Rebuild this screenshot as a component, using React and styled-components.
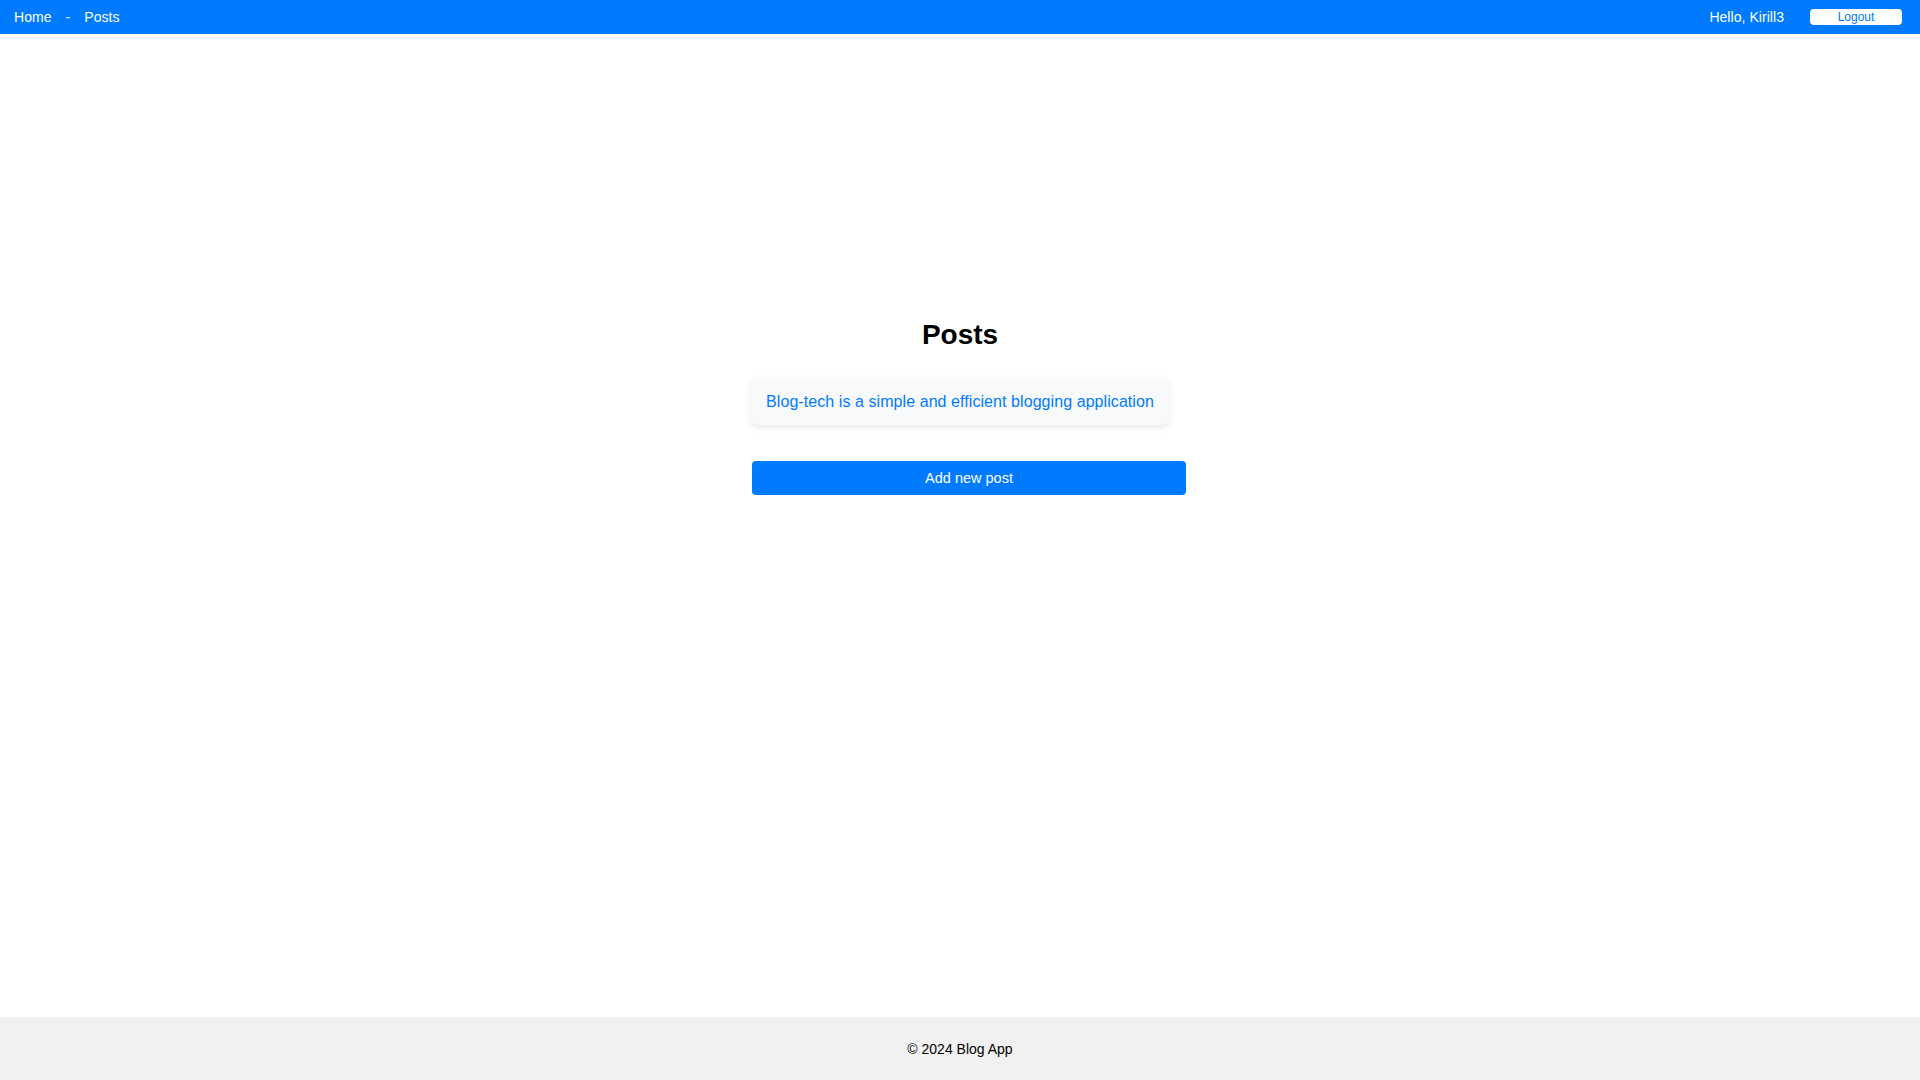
import React from "react";
import styled, { createGlobalStyle } from "styled-components";

const GlobalStyle = createGlobalStyle`
  html, body {
    margin: 0;
    padding: 0;
    background: #ffffff;
    font-family: "Liberation Sans", Arial, sans-serif;
  }
  * { box-sizing: border-box; }
`;

const Page = styled.div`
  min-height: 100vh;
  display: flex;
  flex-direction: column;
`;

const Header = styled.header`
  height: 34px;
  background: #007bff;
  display: flex;
  align-items: center;
  justify-content: space-between;
  padding: 0 18px 0 14px;
  color: #ffffff;
  font-size: 14px;
  letter-spacing: 0.05px;
`;

const Nav = styled.nav`
  display: flex;
  align-items: center;
  gap: 14px;
`;

const NavLink = styled.a`
  color: #ffffff;
  text-decoration: none;
  cursor: pointer;
`;

const Separator = styled.span`
  color: #ffffff;
`;

const UserArea = styled.div`
  display: flex;
  align-items: center;
  gap: 26px;
`;

const LogoutButton = styled.button`
  width: 92px;
  height: 16px;
  padding: 0;
  border: none;
  border-radius: 4px;
  background: #ffffff;
  color: #007bff;
  font-family: "Liberation Sans", Arial, sans-serif;
  font-size: 12px;
  line-height: 16px;
  cursor: pointer;
`;

const Main = styled.main`
  flex: 1;
  display: flex;
  flex-direction: column;
  align-items: center;
  padding-top: 285px;
`;

const Content = styled.section`
  display: flex;
  flex-direction: column;
  align-items: center;
  width: 416px;
`;

const Title = styled.h1`
  margin: 0 0 28px;
  font-size: 28px;
  line-height: 32px;
  font-weight: 700;
  color: #000000;
`;

const Description = styled.p`
  margin: 0 0 36px;
  padding: 14px 15px;
  background: #f8f9fa;
  border-radius: 8px;
  box-shadow: 0 2px 6px rgba(0, 0, 0, 0.1);
  color: #007bff;
  font-size: 16px;
  line-height: 18px;
  letter-spacing: 0.07px;
  white-space: nowrap;
`;

const AddButton = styled.button`
  align-self: flex-start;
  width: 434px;
  height: 34px;
  border: none;
  border-radius: 4px;
  background: #007bff;
  color: #ffffff;
  font-family: "Liberation Sans", Arial, sans-serif;
  font-size: 14.5px;
  cursor: pointer;
`;

const Footer = styled.footer`
  height: 63px;
  background: #f1f1f1;
  display: flex;
  align-items: center;
  justify-content: center;
  font-size: 14px;
  color: #000000;
`;

export default function App() {
  return (
    <>
      <GlobalStyle />
      <Page>
        <Header>
          <Nav>
            <NavLink>Home</NavLink>
            <Separator>-</Separator>
            <NavLink>Posts</NavLink>
          </Nav>
          <UserArea>
            <span>Hello, Kirill3</span>
            <LogoutButton>Logout</LogoutButton>
          </UserArea>
        </Header>
        <Main>
          <Content>
            <Title>Posts</Title>
            <Description>Blog-tech is a simple and efficient blogging application</Description>
            <AddButton>Add new post</AddButton>
          </Content>
        </Main>
        <Footer>© 2024 Blog App</Footer>
      </Page>
    </>
  );
}
